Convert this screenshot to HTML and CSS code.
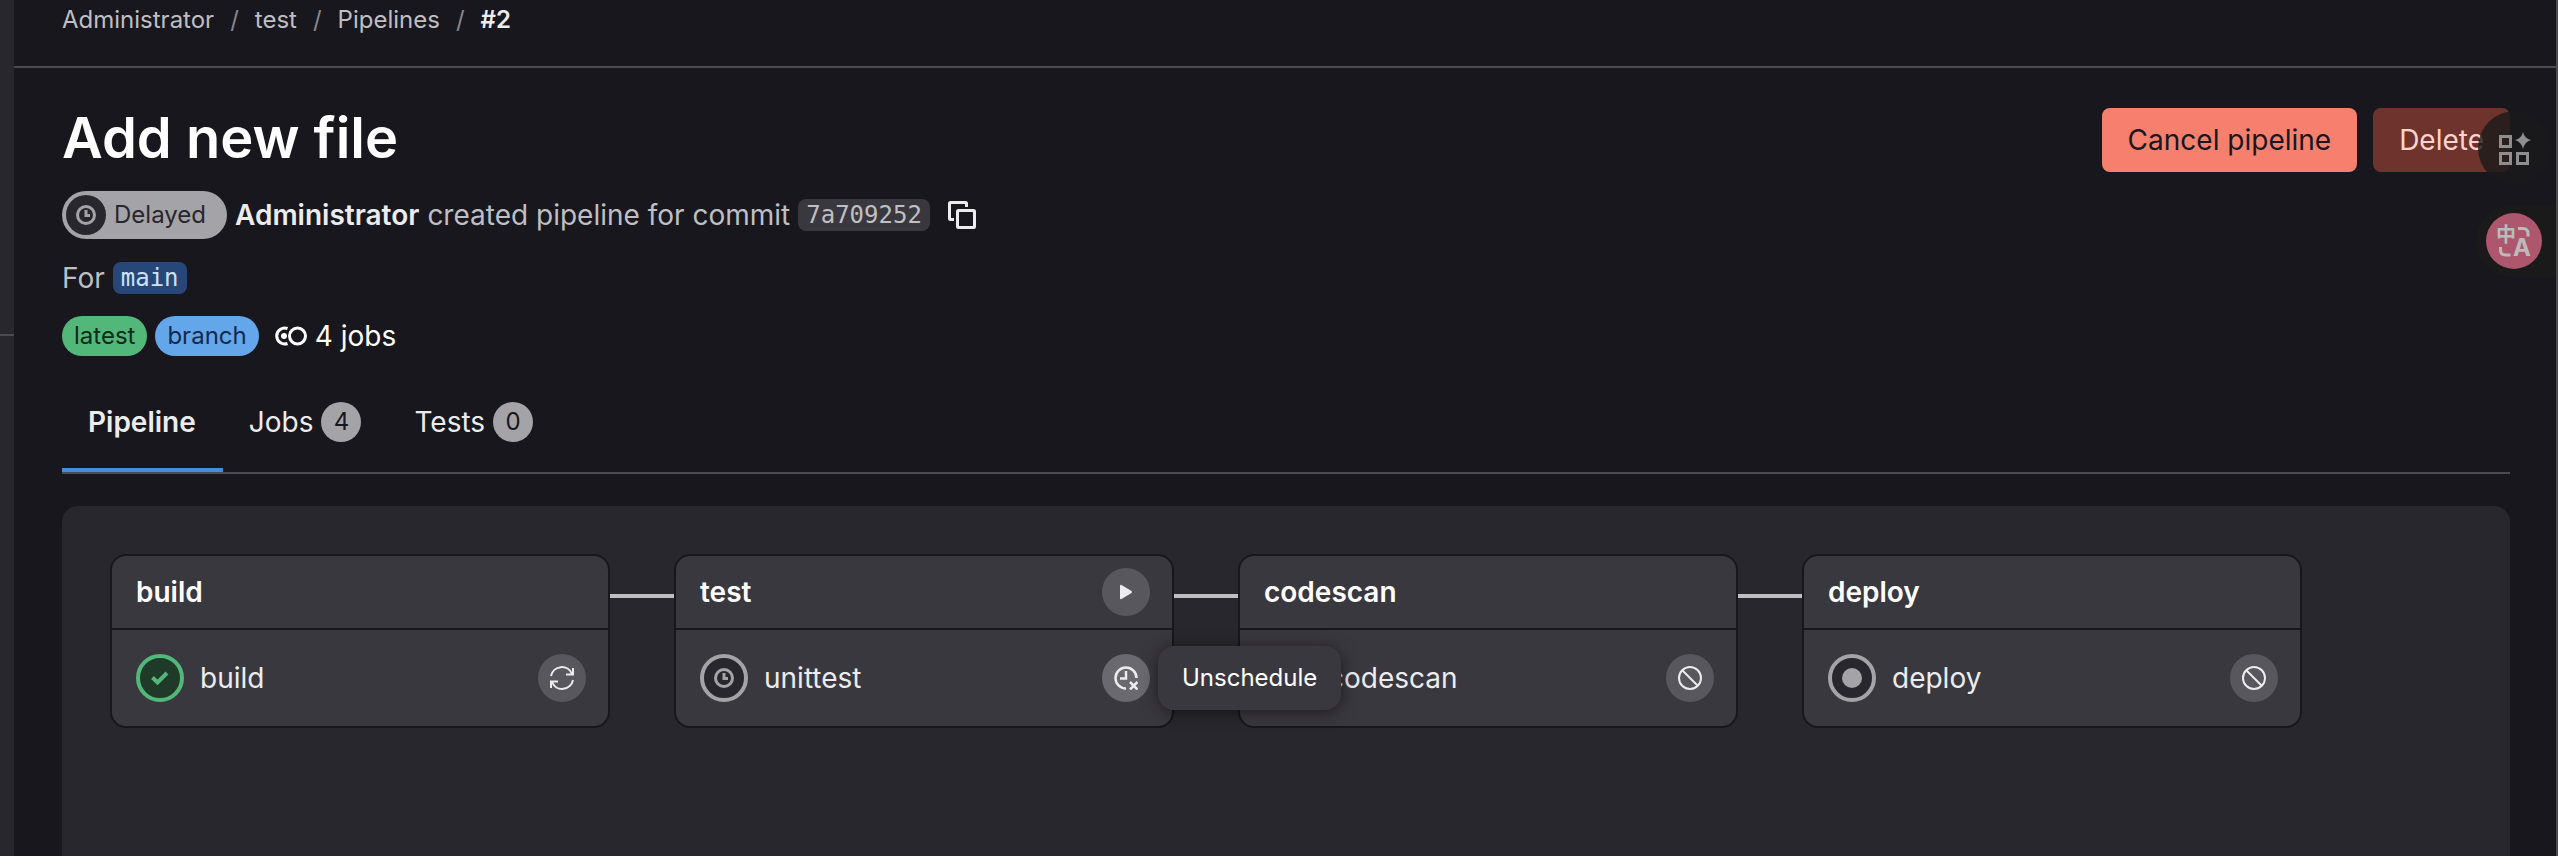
FILE: index.html
```html
<!DOCTYPE html>
<html lang="en">
<head>
    <meta charset="UTF-8">
    <meta name="viewport" content="width=device-width, initial-scale=1.0">
    <title>Add new file · Pipelines</title>
    <link rel="stylesheet" href="styles.css">
</head>
<body>
    <svg class="sprite" aria-hidden="true">
        <symbol id="clock" viewBox="0 0 20 20">
            <circle cx="10" cy="10" r="8.5" fill="none" stroke="currentColor" stroke-width="3"/>
            <path d="M10 5v5.500h4" fill="none" stroke="currentColor" stroke-width="3"/>
        </symbol>
        <symbol id="cancel" viewBox="0 0 24 24">
            <g fill="none" stroke="currentColor" stroke-width="2"><circle cx="12" cy="12" r="11"/><path d="M4.500 4.500l15 15"/></g>
        </symbol>
    </svg>

    <aside class="sidebar"></aside>

    <div class="content">
        <nav class="breadcrumbs" aria-label="Breadcrumb">
            <a href="#">Administrator</a>
            <span>/</span>
            <a href="#">test</a>
            <span>/</span>
            <a href="#">Pipelines</a>
            <span>/</span>
            <a href="#" class="current">#2</a>
        </nav>

        <main>
            <header class="page-header">
                <h1>Add new file</h1>
                <div class="actions">
                    <button class="btn btn-cancel">Cancel pipeline</button>
                    <button class="btn btn-delete">Delete</button>
                </div>
            </header>

            <div class="row info">
                <a href="#" class="status"><span class="status-icon"><svg width="20" height="20"><use href="#clock"/></svg></span>Delayed</a>
                <a href="#" class="author">Administrator</a>
                <span>created pipeline for commit</span>
                <a href="#" class="code">7a709252</a>
                <button class="copy" aria-label="Copy commit SHA">
                    <svg width="28" height="28" viewBox="0 0 28 28" fill="none" stroke="currentColor" stroke-width="3">
                        <path d="M6 18.500H2.500a1 1 0 0 1-1-1v-15a1 1 0 0 1 1-1h15a1 1 0 0 1 1 1V6"/>
                        <rect x="9.500" y="9.500" width="17" height="17" rx="1"/>
                    </svg>
                </button>
            </div>

            <div class="row ref">
                <span>For</span>
                <a href="#" class="code code-ref">main</a>
            </div>

            <div class="row labels">
                <span class="label label-green">latest</span>
                <span class="label label-blue">branch</span>
                <span class="job-count">
                    <svg width="32" height="20" viewBox="0 0 32 20" fill="none" stroke="currentColor" stroke-width="3">
                        <path d="M12.500 2.500A8 8 0 1 0 12.500 17.500"/>
                        <circle cx="22.500" cy="10" r="8"/>
                        <circle cx="9" cy="10" r="3" fill="currentColor" stroke="none"/>
                    </svg>
                    4 jobs
                </span>
            </div>

            <nav class="tabs">
                <a href="#" class="tab active">Pipeline</a>
                <a href="#" class="tab">Jobs <span class="count">4</span></a>
                <a href="#" class="tab">Tests <span class="count">0</span></a>
            </nav>

            <section class="graph">
                <div class="stage">
                    <div class="stage-head"><h2>build</h2></div>
                    <div class="job">
                        <span class="job-status success">
                            <svg width="18" height="14" viewBox="0 0 18 14"><path d="M1.500 6.500l5 5 9.500-9.500" fill="none" stroke="currentColor" stroke-width="4"/></svg>
                        </span>
                        <a href="#">build</a>
                        <button class="round" aria-label="Run again">
                            <svg width="24" height="24" viewBox="0 0 24 24" fill="none" stroke="currentColor" stroke-width="2">
                                <path d="M1 10a11 11 0 0 1 21-2M23 2v6.500h-7M23 14a11 11 0 0 1-21 2M1 22v-6.500h7"/>
                            </svg>
                        </button>
                    </div>
                </div>
                <div class="stage">
                    <div class="stage-head">
                        <h2>test</h2>
                        <button class="round" aria-label="Run all manual">
                            <svg width="14" height="16" viewBox="0 0 14 16"><path d="M1 1.500v13q.5 1 1.500.5l10-6q1-1 0-2l-10-6q-1-.5-1.500.5z" fill="currentColor"/></svg>
                        </button>
                    </div>
                    <div class="job">
                        <span class="job-status"><svg width="20" height="20"><use href="#clock"/></svg></span>
                        <a href="#">unittest</a>
                        <button class="round hover" aria-label="Unschedule" aria-describedby="tip">
                            <svg width="24" height="24" viewBox="0 0 24 24" fill="none" stroke="currentColor" stroke-width="2.500">
                                <path d="M12 22.500A10.500 10.500 0 1 1 22.500 12M12 5v7.500H6M16 16l7.500 7.500M23.500 16l-7.500 7.500"/>
                            </svg>
                        </button>
                        <div class="tooltip" id="tip" role="tooltip">Unschedule</div>
                    </div>
                </div>
                <div class="stage">
                    <div class="stage-head"><h2>codescan</h2></div>
                    <div class="job">
                        <span class="job-status"><i class="dot"></i></span>
                        <a href="#">codescan</a>
                        <button class="round" aria-label="Cancel codescan"><svg width="24" height="24"><use href="#cancel"/></svg></button>
                    </div>
                </div>
                <div class="stage">
                    <div class="stage-head"><h2>deploy</h2></div>
                    <div class="job">
                        <span class="job-status"><i class="dot"></i></span>
                        <a href="#">deploy</a>
                        <button class="round" aria-label="Cancel deploy"><svg width="24" height="24"><use href="#cancel"/></svg></button>
                    </div>
                </div>
            </section>
        </main>
    </div>

    <!-- floating helper buttons -->
    <div class="float">
        <button class="float-apps" aria-label="Apps">
            <svg width="32" height="34" viewBox="0 0 32 34" fill="none" stroke="currentColor" stroke-width="3">
                <rect x="1.500" y="5.500" width="10" height="10"/>
                <rect x="1.500" y="22.500" width="10" height="10"/>
                <rect x="18.500" y="22.500" width="10" height="10"/>
                <path d="M24 1q1.500 6.500 8 8-6.500 2-8 9-1.500-7-8-9 6.500-1.500 8-8z" fill="currentColor" stroke="none"/>
            </svg>
        </button>
        <div class="float-pill">
            <button class="float-translate" aria-label="Translate">
                <svg width="56" height="56" viewBox="-11 -12 56 56" fill="none" stroke="currentColor" stroke-width="3">
                    <path d="M21 3.500h5q5 0 5 5v3M3.500 22v3q0 5 5 5h5"/>
                    <text class="glyph" x="-1" y="17">中</text>
                    <text class="glyph glyph-latin" x="16" y="31">A</text>
                </svg>
            </button>
        </div>
    </div>
</body>
</html>
```
FILE: styles.css
```css
* {
    box-sizing: border-box;
}
body {
    margin: 0;
    display: flex;
    min-height: 100vh;
    background: #18171d;
    color: #bfbfc3;
    font-family: Inter, "Liberation Sans", sans-serif;
    font-size: 28px;
    line-height: 40px;
    border-right: 2px solid #4c4b51;
}
a {
    color: inherit;
    text-decoration: none;
}
button {
    border: none;
    padding: 0;
    font: inherit;
    cursor: pointer;
}
svg {
    display: block;
    flex: none;
}
h1, h2 {
    margin: 0;
    color: #fff;
    font-weight: 600;
}
.sprite {
    position: absolute;
    width: 0;
    height: 0;
}
.sidebar {
    width: 14px;
    flex: none;
    background: #28272d;
}
.sidebar::before {
    content: "";
    display: block;
    height: 334px;
    border-bottom: 2px solid #4c4b51;
}
.content {
    flex: 1;
    min-width: 0;
    display: flex;
    flex-direction: column;
}
.breadcrumbs {
    display: flex;
    gap: 16px;
    height: 68px;
    padding-left: 48px;
    border-bottom: 2px solid #4c4b51;
    font-size: 24px;
}
.breadcrumbs span {
    color: #89888d;
}
.breadcrumbs .current {
    color: #ececef;
    font-weight: 600;
}
main {
    flex: 1;
    display: flex;
    flex-direction: column;
    padding: 40px 46px 0 48px;
}

/* header */
.page-header {
    display: flex;
    justify-content: space-between;
    align-items: flex-start;
}
h1 {
    font-size: 56px;
    line-height: 60px;
}
.actions {
    display: flex;
    gap: 16px;
}
.btn {
    height: 64px;
    padding: 0 26px;
    border-radius: 8px;
}
.btn-cancel {
    background: #f6806d;
    color: #18171d;
}
.btn-delete {
    background: #6e332c;
    color: #fdd4cd;
}
.row {
    display: flex;
    align-items: center;
    gap: 8px;
}
.info {
    margin-top: 19px;
}
.status {
    display: flex;
    align-items: center;
    gap: 8px;
    height: 48px;
    padding: 0 21px 0 4px;
    border-radius: 24px;
    background: #a4a3a8;
    color: #28272d;
    font-size: 24px;
}
.status-icon {
    display: grid;
    place-items: center;
    width: 40px;
    height: 40px;
    border-radius: 50%;
    background: #28272d;
    color: #a4a3a8;
}
.author {
    color: #ececef;
    font-weight: 600;
}
.code {
    padding: 0 8px;
    border-radius: 8px;
    background: #3a383f;
    font: 24px/32px "DejaVu Sans Mono", monospace;
}
.code-ref {
    background: #284779;
    color: #cbe2f9;
}
.copy {
    margin-left: 10px;
    background: none;
    color: #ececef;
}
.ref {
    margin-top: 19px;
}
.labels {
    margin-top: 18px;
}
.label {
    padding: 0 12px;
    border-radius: 20px;
    font-size: 24px;
}
.label-green {
    background: #52b87a;
    color: #0e2a18;
}
.label-blue {
    background: #63a6e9;
    color: #112a4d;
}
.job-count {
    display: flex;
    align-items: center;
    gap: 8px;
    margin-left: 8px;
    color: #fff;
}

/* tabs */
.tabs {
    display: flex;
    margin-top: 14px;
    border-bottom: 2px solid #4c4b51;
    color: #ececef;
}
.tab {
    display: flex;
    align-items: center;
    gap: 8px;
    height: 102px;
    padding: 6px 27px 0 26px;
    border-bottom: 4px solid transparent;
}
.tab.active {
    border-color: #428fdc;
    font-weight: 600;
}
.count {
    width: 40px;
    border-radius: 50%;
    background: #a4a3a8;
    color: #18171d;
    font-size: 24px;
    text-align: center;
}

/* pipeline graph */
.graph {
    flex: 1;
    display: flex;
    align-items: flex-start;
    gap: 64px;
    margin-top: 32px;
    padding: 48px;
    border-radius: 16px 16px 0 0;
    background: #28272d;
}
.stage {
    position: relative;
    width: 500px;
    border: 2px solid #18171d;
    border-radius: 16px;
    background: #3a383f;
}
.stage + .stage::before {
    content: "";
    position: absolute;
    right: 100%;
    top: 38px;
    width: 64px;
    height: 4px;
    margin-right: 2px;
    background: #bfbfc3;
}
.stage-head {
    display: flex;
    align-items: center;
    justify-content: space-between;
    height: 74px;
    padding: 0 22px 0 24px;
    border-bottom: 2px solid #18171d;
}
h2 {
    font-size: 28px;
}
.job {
    position: relative;
    display: flex;
    align-items: center;
    gap: 16px;
    padding: 24px 22px 24px 24px;
    color: #ececef;
}
.job-status {
    display: grid;
    place-items: center;
    width: 48px;
    height: 48px;
    border: 4px solid #a4a3a8;
    border-radius: 50%;
    background: #28272d;
    color: #a4a3a8;
}
.job-status.success {
    border-color: #52b87a;
    background: #1f3a29;
    color: #52b87a;
}
.dot {
    width: 20px;
    height: 20px;
    border-radius: 50%;
    background: #a4a3a8;
}
.round {
    display: grid;
    place-items: center;
    width: 48px;
    height: 48px;
    border-radius: 50%;
    background: #59575e;
    color: #ececef;
}
.job .round {
    margin-left: auto;
}
.round.hover {
    background: #6b6970;
}
.tooltip {
    position: absolute;
    left: 482px;
    top: 16px;
    z-index: 1;
    padding: 12px 24px;
    border-radius: 16px;
    background: #3a383f;
    box-shadow: 0 2px 16px rgba(0, 0, 0, 0.5);
    color: #fff;
    font-size: 24px;
}

/* floating buttons */
.float {
    position: fixed;
    top: 111px;
    right: 2px;
    display: flex;
    flex-direction: column;
    align-items: flex-end;
    gap: 20px;
}
.float-apps {
    display: grid;
    place-items: center;
    width: 74px;
    height: 74px;
    margin-right: 4px;
    border-radius: 50%;
    background: rgba(26, 26, 27, 0.8);
    color: #8f8e8f;
}
.float-pill {
    padding: 8px 14px 8px 10px;
    border-radius: 36px 0 0 36px;
    background: #1a1a1b;
}
.float-translate {
    display: grid;
    place-items: center;
    width: 56px;
    height: 56px;
    border-radius: 50%;
    background: #ad566d;
    color: #bbb;
}
.glyph {
    fill: currentColor;
    stroke: none;
    font: bold 20px "Noto Sans CJK SC", sans-serif;
}
.glyph-latin {
    font: bold 24px Inter, sans-serif;
}
```
